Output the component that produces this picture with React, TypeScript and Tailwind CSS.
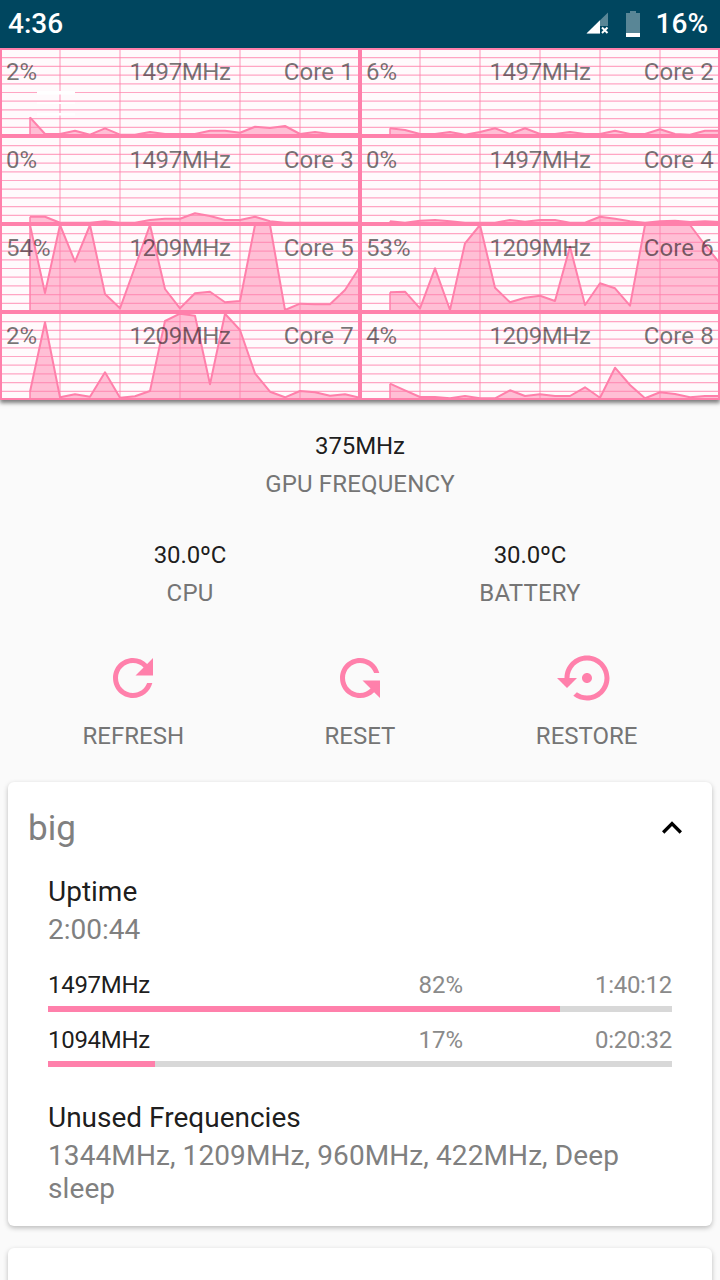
import React from 'react';

const PINK = '#ff80ab';

// samples are spaced 15px apart, starting 30px into the graph
const CORES = [
  { load: '2%', freq: '1497MHz', name: 'Core 1', pts: [69.3, 86, 86, 82.7, 86.7, 80.3, 86.7, 86.7, 84, 86, 86, 86, 82.7, 82.7, 84.7, 78.7, 80, 78, 86, 84, 86, 86, 86] },
  { load: '6%', freq: '1497MHz', name: 'Core 2', pts: [80.3, 82, 86, 86, 84, 86.7, 84, 80.3, 86, 80.3, 86, 86, 84, 86, 86, 82.7, 86, 86, 81.3, 86, 86.7, 82.7, 82.7] },
  { load: '0%', freq: '1497MHz', name: 'Core 3', pts: [80.7, 80.7, 86.7, 86.7, 86.7, 85.3, 86.7, 86.7, 84, 82.7, 82.7, 77.3, 80, 84, 84, 80.7, 85.3, 86.7, 86.7, 86.7, 86.7, 86.7, 86.7] },
  { load: '0%', freq: '1497MHz', name: 'Core 4', pts: [85.3, 86.7, 84.7, 84, 85.3, 86.7, 86.7, 86.7, 84, 85.7, 84, 84, 86.7, 86.7, 80.7, 82.7, 85.3, 86.7, 85.3, 84.7, 86, 85.3, 86] },
  { load: '54%', freq: '1209MHz', name: 'Core 5', pts: [1, 69, 1, 37.7, 1, 70, 84.3, 43, 1, 65, 84.3, 69.3, 67.7, 78.3, 77, 1, 1, 86, 79.7, 80.3, 80.3, 66, 42.7] },
  { load: '53%', freq: '1209MHz', name: 'Core 6', pts: [68.3, 67.7, 84.3, 44.3, 86, 19.3, 1, 63.7, 78.3, 73.7, 71.7, 77, 22.7, 81, 59.3, 64.3, 81.7, 1, 1, 1, 1, 21, 39.3] },
  { load: '2%', freq: '1209MHz', name: 'Core 7', pts: [79.7, 10.3, 85.3, 82.3, 84.7, 60.3, 85.7, 84.3, 79, 9, 1.7, 3.7, 72.3, 1.7, 18, 61.3, 79.7, 85.3, 79, 80.3, 83.7, 82.3, 85.7] },
  { load: '4%', freq: '1209MHz', name: 'Core 8', pts: [71.7, 78.3, 85, 85, 86.3, 84, 86.3, 86.3, 78.3, 84, 82.3, 84, 84, 75.3, 85.7, 55.7, 73, 86.3, 80.3, 82, 85.3, 84, 84] },
];

const hLines = Array.from({ length: 10 }, (_, i) => 1 + i * 8.7);
const vLines = [60, 120, 180, 240, 300];

function MdIcon({ d, className }: { d: string; className?: string }) {
  return (
    <svg viewBox="0 0 24 24" className={className} fill="currentColor">
      <path d={d} />
    </svg>
  );
}

const REFRESH = 'M17.65 6.35C16.2 4.9 14.21 4 12 4c-4.42 0-7.99 3.58-7.99 8s3.57 8 7.99 8c3.73 0 6.84-2.55 7.73-6h-2.08c-.82 2.33-3.04 4-5.65 4-3.31 0-6-2.69-6-6s2.69-6 6-6c1.66 0 3.14.69 4.22 1.78L13 11h7V4l-2.35 2.35z';
const RESTORE = 'M14 12c0-1.1-.9-2-2-2s-2 .9-2 2 .9 2 2 2 2-.9 2-2zm-2-9c-4.97 0-9 4.03-9 9H0l4 4 4-4H5c0-3.87 3.13-7 7-7s7 3.13 7 7-3.13 7-7 7c-1.51 0-2.91-.49-4.06-1.3l-1.42 1.44C8.04 20.3 9.94 21 12 21c4.97 0 9-4.03 9-9s-4.03-9-9-9z';
const CHEVRON = 'M12 8l-6 6 1.41 1.41L12 10.83l4.59 4.58L18 14z';

function CoreGraph({ core, first }: { core: (typeof CORES)[number]; first: boolean }) {
  const line = core.pts.map((y, i) => `${30 + i * 15},${y}`).join(' ');
  return (
    <div className="relative h-[88px] bg-[#fffafc]">
      <svg viewBox="0 0 360 88" className="absolute inset-0 block h-[88px] w-[360px]">
        <polygon points={`30,87 ${line} 360,87`} fill={PINK} fillOpacity={0.48} />
        {hLines.map((y) => (
          <line key={y} x1={0} x2={360} y1={y} y2={y} stroke={PINK} strokeWidth={1.2} strokeOpacity={0.7} />
        ))}
        {vLines.map((x) => (
          <line key={x} x1={x} x2={x} y1={0} y2={88} stroke={PINK} strokeWidth={1.2} strokeOpacity={0.7} />
        ))}
        <line x1={30} x2={30} y1={core.pts[0]} y2={87} stroke={PINK} strokeWidth={1.5} />
        <polyline points={line} fill="none" stroke={PINK} strokeWidth={2} strokeLinejoin="round" />
        <rect x={0} y={0} width={360} height={88} fill="none" stroke={PINK} strokeWidth={4} />
        {first && (
          <g fill="#ffffff">
            <rect x={37} y={43} width={38} height={3.5} />
            <rect x={37} y={54} width={38} height={2} />
            <rect x={37} y={65} width={38} height={2.5} />
          </g>
        )}
      </svg>
      <div className="absolute inset-x-0 top-[10px] grid grid-cols-3 px-[6px] text-[24px] leading-[28px] text-black/55">
        <span>{core.load}</span>
        <span className="text-center tracking-[-0.4px]">{core.freq}</span>
        <span className="text-right tracking-[0.15px]">{core.name}</span>
      </div>
    </div>
  );
}

function Stat({ value, label }: { value: string; label: string }) {
  return (
    <div className="flex flex-col items-center">
      <span className="text-[24px] leading-[37px] tracking-[-0.1px] text-black/90">{value}</span>
      <span className="text-[24px] leading-[38px] tracking-[0.15px] text-[#757575]">{label}</span>
    </div>
  );
}

function Action({ d, label, iconClass }: { d: string; label: string; iconClass?: string }) {
  return (
    <div className="flex flex-col items-center">
      <MdIcon d={d} className={`h-[60px] w-[60px] text-[#ff80ab] ${iconClass ?? ''}`} />
      <span className="mt-[9px] text-[24px] leading-[38px] text-[#757575]">{label}</span>
    </div>
  );
}

function FreqRow({ freq, pct, time, fill }: { freq: string; pct: number; time: string; fill: number }) {
  return (
    <div>
      <div className="flex text-[24px] leading-[32px]">
        <span className="flex-1 tracking-[-0.3px] text-black/90">{freq}</span>
        <span className="text-[#8a8a8a]">{pct}%</span>
        <span className="w-[209px] text-right tracking-[-0.3px] text-[#8a8a8a]">{time}</span>
      </div>
      <div className="mt-[5px] h-[6px] bg-[#d8d8d8]">
        <div className="h-full bg-[#ff80ab]" style={{ width: `${fill}%` }} />
      </div>
    </div>
  );
}

export default function App() {
  return (
    <div className="flex h-[1280px] w-[720px] flex-col overflow-hidden bg-[#fafafa] font-['Roboto',sans-serif]">
      <div className="flex h-[48px] shrink-0 items-center bg-[#00465f] pl-[8px] pr-[12px] text-white">
        <span className="text-[28px] font-medium leading-none">4:36</span>
        <svg viewBox="0 0 24 24" className="mb-[2px] ml-auto h-[24px] w-[24px]">
          <path d="M0.5 22.5 L22 1.5 V15 H14 V22.5 Z" fill="#ffffff" fillOpacity={0.35} />
          <path d="M0.5 22.5 L14 9.3 V22.5 Z" fill="#ffffff" />
          <path d="M16 16.5 L21.5 22 M21.5 16.5 L16 22" stroke="#ffffff" strokeWidth={2} />
        </svg>
        <svg viewBox="0 0 14 26" className="ml-[16px] h-[26px] w-[14px]">
          <path d="M4 0 H10 V2 H14 V26 H0 V2 H4 Z" fill="#ffffff" fillOpacity={0.35} />
          <rect x={0} y={22} width={14} height={4} fill="#ffffff" />
        </svg>
        <span className="ml-[16px] text-[28px] font-medium leading-none">16%</span>
      </div>

      <div className="grid shrink-0 grid-cols-2 shadow-[0_3px_4px_rgba(0,0,0,0.5)]">
        {CORES.map((core, i) => (
          <CoreGraph key={core.name} core={core} first={i === 0} />
        ))}
      </div>

      <div className="mt-[28px] flex justify-center">
        <Stat value="375MHz" label="GPU FREQUENCY" />
      </div>
      <div className="mt-[34px] grid grid-cols-2 px-[20px]">
        <Stat value="30.0ºC" label="CPU" />
        <Stat value="30.0ºC" label="BATTERY" />
      </div>
      <div className="mt-[36px] grid grid-cols-3 px-[20px]">
        <Action d={REFRESH} label="REFRESH" />
        <Action d={REFRESH} label="RESET" iconClass="-scale-y-100" />
        <Action d={RESTORE} label="RESTORE" />
      </div>

      <div className="mx-[8px] mt-[27px] h-[444px] shrink-0 rounded-[6px] bg-white pt-[24px] shadow-[0_2px_5px_rgba(0,0,0,0.25)]">
        <div className="flex items-center justify-between pl-[20px] pr-[20px]">
          <span className="translate-y-[1px] text-[35px] leading-[44px] text-[#808080]">big</span>
          <MdIcon d={CHEVRON} className="h-[40px] w-[40px] text-black" />
        </div>
        <div className="px-[40px]">
          <div className="mt-[25px] text-[28px] leading-[34px] text-black/90">Uptime</div>
          <div className="mt-[2px] text-[28px] leading-[38px] text-[#808080]">2:00:44</div>
          <div className="mt-[20px] flex flex-col gap-[12px]">
            <FreqRow freq="1497MHz" pct={82} time="1:40:12" fill={82} />
            <FreqRow freq="1094MHz" pct={17} time="0:20:32" fill={17.2} />
          </div>
          <div className="mt-[34px] text-[28px] leading-[34px] text-black/90">Unused Frequencies</div>
          <div className="mt-[4px] text-[28px] leading-[33px] tracking-[0.1px] text-[#808080]">
            1344MHz, 1209MHz, 960MHz, 422MHz, Deep sleep
          </div>
        </div>
      </div>

      <div className="mx-[8px] mt-[22px] h-[60px] shrink-0 rounded-[6px] bg-white shadow-[0_2px_5px_rgba(0,0,0,0.25)]" />
    </div>
  );
}
